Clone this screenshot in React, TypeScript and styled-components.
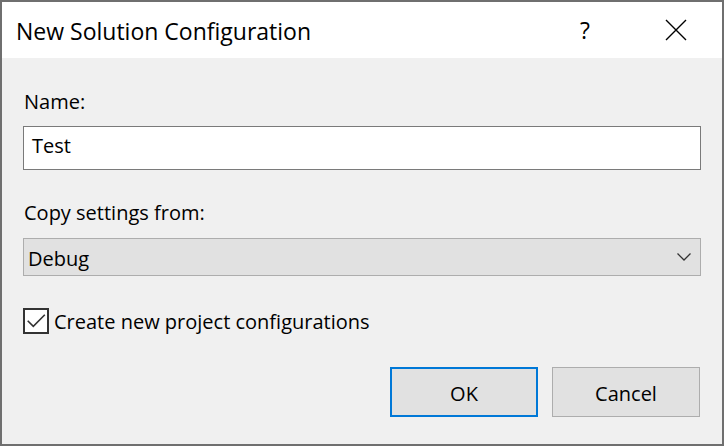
import React from "react";
import styled, { createGlobalStyle } from "styled-components";

const Global = createGlobalStyle`
  html, body { margin: 0; padding: 0; background: #f0f0f0; }
  body { font-family: "Open Sans", "Noto Sans", sans-serif; color: #000; }
`;

const Window = styled.div`
  width: 724px;
  height: 446px;
  box-sizing: border-box;
  border: 2px solid #6f6f6f;
  background: #f0f0f0;
  display: flex;
  flex-direction: column;
  overflow: hidden;
`;

const TitleBar = styled.div`
  height: 56px;
  flex: none;
  background: #ffffff;
  display: flex;
  align-items: center;
  padding-left: 14px;
`;

const Title = styled.div`
  flex: 1;
  font-size: 23px;
  line-height: 28px;
  padding-top: 1px;
  color: #000;
`;

const TitleButton = styled.div<{ $w: number }>`
  width: ${(p) => p.$w}px;
  height: 56px;
  display: flex;
  align-items: center;
  justify-content: center;
  font-size: 23px;
  color: #000;
`;

const Body = styled.div`
  flex: 1;
  display: flex;
  flex-direction: column;
  padding: 32px 21px 0 21px;
`;

const Label = styled.div<{ $mt?: number }>`
  font-size: 20px;
  line-height: 24px;
  margin-top: ${(p) => p.$mt ?? 0}px;
  padding-left: 1px;
`;

const TextBox = styled.div`
  margin-top: 12px;
  height: 44px;
  box-sizing: border-box;
  border: 1px solid #7a7a7a;
  background: #ffffff;
  padding: 7px 8px 0 8px;
  font-size: 20px;
  line-height: 24px;
`;

const Select = styled.div`
  margin-top: 13px;
  height: 38px;
  box-sizing: border-box;
  border: 1px solid #adadad;
  background: #e1e1e1;
  padding: 8px 9px 0 4px;
  font-size: 20px;
  line-height: 24px;
  display: flex;
  justify-content: space-between;
`;

const Chevron = styled.svg`
  margin-top: 6px;
`;

const CheckRow = styled.div`
  margin-top: 32px;
  display: flex;
  align-items: center;
  gap: 5px;
`;

const CheckBox = styled.div`
  width: 26px;
  height: 26px;
  box-sizing: border-box;
  border: 2px solid #333333;
  background: #ffffff;
  display: flex;
  align-items: center;
  justify-content: center;
`;

const CheckLabel = styled.div`
  font-size: 20px;
  line-height: 24px;
  padding-top: 2px;
`;

const ButtonRow = styled.div`
  margin-top: 33px;
  display: flex;
  justify-content: flex-end;
  gap: 14px;
  padding-right: 1px;
`;

const Button = styled.div<{ $default?: boolean }>`
  width: 148px;
  height: 50px;
  box-sizing: border-box;
  background: #e1e1e1;
  border: ${(p) => (p.$default ? "2px solid #0078d7" : "1px solid #adadad")};
  display: flex;
  align-items: center;
  justify-content: center;
  padding-top: 3px;
  font-size: 20px;
  line-height: 24px;
`;

export default function App() {
  return (
    <>
      <Global />
      <Window>
        <TitleBar>
          <Title>New Solution Configuration</Title>
          <TitleButton $w={90}>?</TitleButton>
          <TitleButton $w={92}>
            <svg width="22" height="22" viewBox="0 0 22 22">
              <path d="M1 1 L21 21 M21 1 L1 21" stroke="#000" strokeWidth="1.4" fill="none" />
            </svg>
          </TitleButton>
        </TitleBar>
        <Body>
          <Label>Name:</Label>
          <TextBox>Test</TextBox>
          <Label $mt={31}>Copy settings from:</Label>
          <Select>
            <span>Debug</span>
            <Chevron width="14" height="8" viewBox="0 0 14 8">
              <path d="M0.5 0.5 L7 7 L13.5 0.5" stroke="#333" strokeWidth="1.3" fill="none" />
            </Chevron>
          </Select>
          <CheckRow>
            <CheckBox>
              <svg width="22" height="22" viewBox="0 0 22 22">
                <path d="M2.7 10.7 L8.3 16.3 L19.8 4.7" stroke="#333" strokeWidth="1.6" fill="none" />
              </svg>
            </CheckBox>
            <CheckLabel>Create new project configurations</CheckLabel>
          </CheckRow>
          <ButtonRow>
            <Button $default>OK</Button>
            <Button>Cancel</Button>
          </ButtonRow>
        </Body>
      </Window>
    </>
  );
}
